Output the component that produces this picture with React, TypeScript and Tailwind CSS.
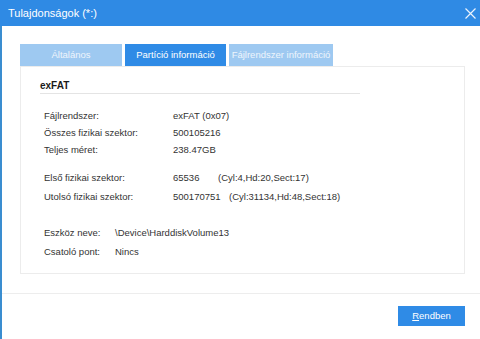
const rows1 = [
	{ label: "Fájlrendszer:", value: "exFAT (0x07)", mt: "mt-[14px]" },
	{ label: "Összes fizikai szektor:", value: "500105216", mt: "mt-[1px]" },
	{ label: "Teljes méret:", value: "238.47GB", mt: "mt-[1px]" },
];

const App = () => {
	return (
		<div className="w-[480px] h-[339px] flex flex-col bg-white overflow-hidden" style={{ fontFamily: '"Liberation Sans", Arial, sans-serif' }}>
			{/* title bar */}
			<div className="h-[26px] shrink-0 bg-[#2f8ae4] flex items-center justify-between pl-2 pr-[4px]">
				<span className="text-white text-[11px] leading-none">Tulajdonságok (*:)</span>
				<svg width="11" height="11" viewBox="0 0 11 11" className="mr-[0px]">
					<path d="M0.5 0.5 L10.5 10.5 M10.5 0.5 L0.5 10.5" stroke="#eaf3fd" strokeWidth="1.2" fill="none" />
				</svg>
			</div>

			<div className="flex-1 flex flex-col border-l-2 border-[#3a8dd0]">
				<div className="pl-[18px] pt-[18px]">
					{/* tabs */}
					<div className="flex gap-[3px] h-[22px] text-[9.5px]">
						<div className="w-[102px] bg-[#9ec9f1] text-[#eef5fc] flex items-center justify-center">Általános</div>
						<div className="w-[101px] bg-[#2f8be6] text-white flex items-center justify-center">Partíció információ</div>
						<div className="w-[104px] bg-[#9ec9f1] text-[#eef5fc] flex items-center justify-center">Fájlrendszer információ</div>
					</div>

					{/* panel */}
					<div className="w-[445px] h-[208px] border border-[#ececec] bg-white text-[9.5px] text-[#333]">
						<div className="ml-[19px] mt-[12px] w-[320px] h-[15px] leading-[14px] border-b border-[#e4e4e4] text-[10px] font-bold text-[#1a1a1a]">exFAT</div>

						<div className="pl-[23px] flex flex-col">
							{rows1.map((r) => (
								<div key={r.label} className={`flex h-[16px] items-center ${r.mt}`}>
									<span className="w-[129px]">{r.label}</span>
									<span>{r.value}</span>
								</div>
							))}

							<div className="flex h-[16px] items-center mt-[12px]">
								<span className="w-[129px]">Első fizikai szektor:</span>
								<span className="w-[45px]">65536</span>
								<span>(Cyl:4,Hd:20,Sect:17)</span>
							</div>
							<div className="flex h-[16px] items-center mt-[3px]">
								<span className="w-[129px]">Utolsó fizikai szektor:</span>
								<span className="w-[56px]">500170751</span>
								<span>(Cyl:31134,Hd:48,Sect:18)</span>
							</div>

							<div className="flex h-[16px] items-center mt-[20px]">
								<span className="w-[71px]">Eszköz neve:</span>
								<span>\Device\HarddiskVolume13</span>
							</div>
							<div className="flex h-[16px] items-center mt-[3px]">
								<span className="w-[71px]">Csatoló pont:</span>
								<span>Nincs</span>
							</div>
						</div>
					</div>
				</div>

				{/* footer */}
				<div className="mt-[19px] border-t border-[#ededed] flex justify-end pr-[15px] pt-[12px]">
					<button className="w-[67px] h-[20px] bg-[#2f8be6] text-white text-[9.5px] flex items-center justify-center">
						<span><span className="underline">R</span>endben</span>
					</button>
				</div>
			</div>
		</div>
	);
};

export default App;
